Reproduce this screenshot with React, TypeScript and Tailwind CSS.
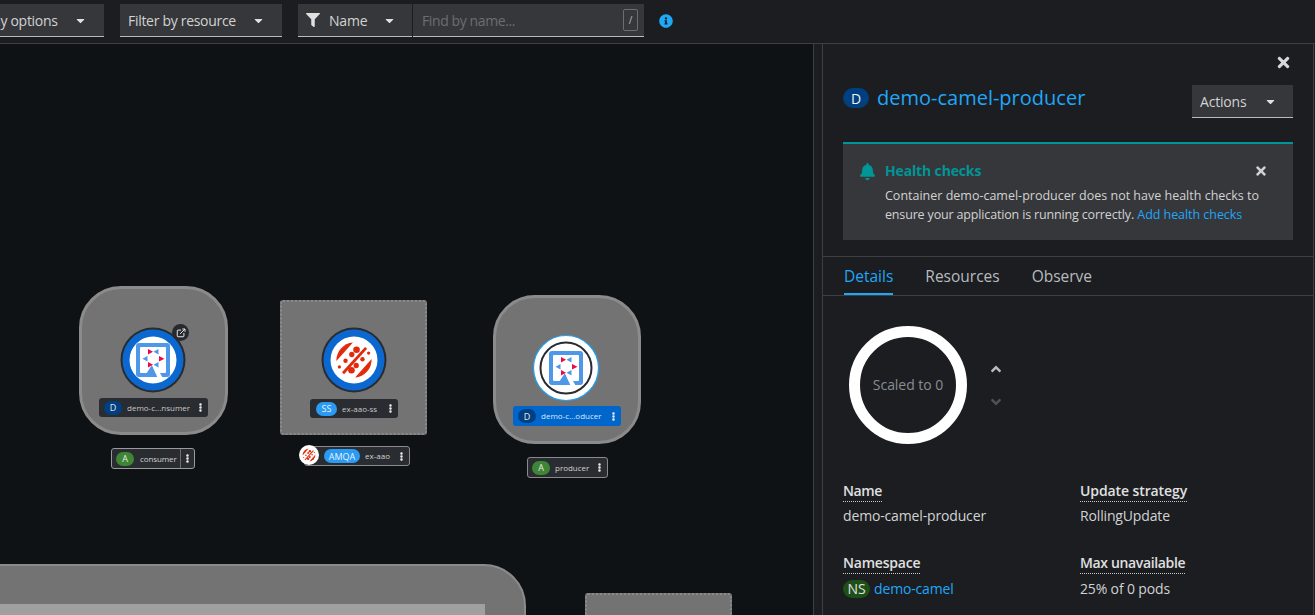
import React from "react";
import { FaBell, FaCaretDown, FaEllipsisV, FaFilter, FaInfoCircle, FaTimes, FaAngleUp, FaAngleDown } from "react-icons/fa";

function CamelIcon({ x, y }: { x: number; y: number }) {
  return (
    <g transform={`translate(${x} ${y})`}>
      <rect x="0" y="0" width="34" height="34" rx="3" fill="#4f97e8" />
      <rect x="4" y="4" width="26" height="26" rx="1" fill="#fff" />
      <path fill="#4f97e8" d="M10 31L16 22L20 31Z" />
      <path fill="#fff" d="M16 22L19 21L26.500 34.500L21.500 34.500Z" />
      <path fill="#ee0a46" d="M12 6l5 2.700-5 2.700ZM23 13l5.500 2.700-5.500 2.700ZM12 19l5 2.700-5 2.700Z" />
      <path fill="#4f97e8" d="M22.500 6v5.400l-5-2.700ZM6.500 15.700l5-2.700v5.400ZM22.500 19v5.400l-5-2.700Z" />
    </g>
  );
}

function RedIcon({ size }: { size: number }) {
  return (
    <svg viewBox="0 0 40 40" width={size} height={size} className="block">
      <path fill="#e02b0c" d="M4 21A16.500 16.500 0 0 1 19 4Z" />
      <path fill="#e02b0c" d="M36 19A16.500 16.500 0 0 1 21 36Z" />
      <path stroke="#e02b0c" strokeWidth="2.600" d="M10 32L31 9" />
      <circle cx="22.300" cy="10.700" r="3" fill="#e02b0c" />
      <circle cx="18" cy="15" r="2.400" fill="#e02b0c" />
      <circle cx="12.300" cy="20.700" r="2" fill="#e02b0c" />
      <circle cx="6.700" cy="26.300" r="1.500" fill="#e02b0c" />
      <circle cx="17.700" cy="29.300" r="3" fill="#e02b0c" />
      <circle cx="22" cy="25" r="2.400" fill="#e02b0c" />
      <circle cx="27.700" cy="19.300" r="2" fill="#e02b0c" />
      <circle cx="33.300" cy="13.700" r="1.500" fill="#e02b0c" />
    </svg>
  );
}

function Ring({ children }: { children: React.ReactNode }) {
  return (
    <svg viewBox="0 0 68 68" width="68" height="68" className="block">
      <circle cx="34" cy="34" r="32.500" fill="#2a2b2e" />
      <circle cx="34" cy="34" r="30.500" fill="#0a68d0" />
      <circle cx="34" cy="34" r="23.500" fill="#fff" />
      {children}
    </svg>
  );
}

function Badge({ className, children }: { className: string; children: React.ReactNode }) {
  return (
    <span className={`flex h-[14px] items-center justify-center rounded-full text-[9px] leading-none ${className}`}>{children}</span>
  );
}

function Kebab({ className = "" }: { className?: string }) {
  return <FaEllipsisV className={`text-[9px] text-[#e8e8e8] ${className}`} />;
}

function Select({ label, className }: { label: string; className: string }) {
  return (
    <div className={`flex h-[33px] shrink-0 items-center justify-between border-b border-[#b8bbbe] bg-[#36373b] pl-2 pr-[17px] text-[14px] tracking-[-0.3px] text-[#d2d2d2] ${className}`}>
      <span>{label}</span>
      <FaCaretDown className="text-[13px] text-[#e0e0e0]" />
    </div>
  );
}

function Field({ label, value, labelClass = "tracking-[-0.1px]", valueClass = "mt-[5px]" }: { label: string; value: React.ReactNode; labelClass?: string; valueClass?: string }) {
  return (
    <div>
      <div className={`text-[14px] font-semibold leading-[19px] text-[#e0e0e0] ${labelClass}`}>
        <span className="border-b border-dotted border-[#c8c8c8] pb-[1px]">{label}</span>
      </div>
      <div className={`text-[14px] leading-[21px] tracking-[-0.15px] text-[#d2d2d2] ${valueClass}`}>{value}</div>
    </div>
  );
}

export default function App() {
  return (
    <div className="flex h-screen w-full flex-col overflow-hidden bg-[#1b1d21] font-['Open_Sans',sans-serif]">
      <div className="flex h-[44px] shrink-0 items-start border-b border-[#3d3f43] pt-[4px]">
        <Select label="Display options" className="-ml-[46px] w-[150px]" />
        <Select label="Filter by resource" className="ml-[16px] w-[162px]" />
        <div className="ml-[16px] flex">
          <div className="flex h-[33px] w-[114px] items-center border-b border-[#b8bbbe] bg-[#36373b] pl-2 text-[14px] tracking-[-0.2px] text-[#d2d2d2]">
            <FaFilter className="text-[14px] text-[#e0e0e0]" />
            <span className="ml-[9px]">Name</span>
            <FaCaretDown className="ml-auto mr-[16px] text-[13px] text-[#e0e0e0]" />
          </div>
          <div className="ml-[1px] flex h-[33px] w-[231px] items-center justify-between border-b border-[#b8bbbe] bg-[#36373b] pl-[9px] pr-[6px] text-[14px] tracking-[-0.4px] text-[#6a6e73]">
            <span>Find by name...</span>
            <span className="flex h-[22px] w-[15px] items-center justify-center rounded-[2px] border border-[#6a6e73] text-[10px] text-[#b8bbbe]">/</span>
          </div>
        </div>
        <FaInfoCircle className="ml-[15px] mt-[10px] text-[14px] text-[#1fa7f8]" />
      </div>

      <div className="flex min-h-0 flex-1">
        <div className="relative w-[814px] shrink-0 overflow-hidden border-r border-[#3d3f43] bg-[#0f1214]">
          {/* consumer */}
          <div className="absolute left-[79px] top-[242px] h-[149px] w-[149px] rounded-[42px] border-[3px] border-[#8b8b8b] bg-[#737373]" />
          <div className="absolute left-[119px] top-[282px]"><Ring><CamelIcon x={17} y={17} /></Ring></div>
          <div className="absolute left-[172px] top-[280px] flex h-[17px] w-[17px] items-center justify-center rounded-full bg-[#26292d]">
            <svg viewBox="0 0 12 12" width="10" height="10" fill="none" stroke="#e8e8e8" strokeWidth="1.200"><path d="M6 2.500H2.500a1 1 0 0 0-1 1V9.500a1 1 0 0 0 1 1H8.500a1 1 0 0 0 1-1V6M5 7l5.500-5.500M7.500 1.200h3.300v3.300" /></svg>
          </div>
          <div className="absolute left-[99px] top-[354px] flex h-[19px] w-[109px] items-center rounded-[3px] bg-[#292c30] pl-[5px] pr-[3px] text-[8px] text-[#c8c8c8]">
            <Badge className="w-[18px] bg-[#004080] text-[#e8e8e8]">D</Badge>
            <span className="ml-[5px]">demo-c...nsumer</span>
            <Kebab className="ml-auto" />
          </div>
          <div className="absolute left-[111px] top-[404px] flex h-[21px] w-[84px] items-center rounded-[3px] border border-[#9a9a9a] bg-[#292c30] pl-[4px] text-[8px] text-[#d2d2d2]">
            <Badge className="w-[18px] bg-[#3e8635] text-[#e8e8e8]">A</Badge>
            <span className="ml-[6px] tracking-[-0.1px]">consumer</span>
            <span className="ml-auto flex h-full w-[14px] items-center justify-center border-l border-[#6a6e73]"><Kebab /></span>
          </div>

          {/* ex-aao */}
          <div className="absolute left-[280px] top-[256px] h-[135px] w-[147px] rounded-[3px] border-2 border-dotted border-[#8b8b8b] bg-[#737373]" />
          <div className="absolute left-[320px] top-[282px]">
            <Ring><foreignObject x="12" y="12" width="44" height="44"><RedIcon size={44} /></foreignObject></Ring>
          </div>
          <div className="absolute left-[310px] top-[355px] flex h-[19px] w-[88px] items-center rounded-[3px] bg-[#292c30] pl-[6px] pr-[3px] text-[8px] text-[#c8c8c8]">
            <Badge className="w-[21px] bg-[#2b9af3] text-[#e8f4ff]">SS</Badge>
            <span className="ml-[5px]">ex-aao-ss</span>
            <Kebab className="ml-auto" />
          </div>
          <div className="absolute left-[304px] top-[402px] flex h-[20px] w-[106px] items-center rounded-[3px] border border-[#8a8a8a] bg-[#292c30] pl-[19px] pr-[3px] text-[8px] text-[#d2d2d2]">
            <Badge className="w-[36px] bg-[#2b9af3] text-[#e8f4ff]">AMQA</Badge>
            <span className="ml-[5px]">ex-aao</span>
            <Kebab className="ml-auto" />
          </div>
          <div className="absolute left-[299px] top-[401px] flex h-[20px] w-[20px] items-center justify-center rounded-full bg-white"><RedIcon size={16} /></div>

          {/* producer */}
          <div className="absolute left-[493px] top-[251px] h-[149px] w-[148px] rounded-[42px] border-[3px] border-[#8b8b8b] bg-[#737373]" />
          <div className="absolute left-[532px] top-[290px]">
            <svg viewBox="0 0 68 68" width="68" height="68" className="block">
              <circle cx="34" cy="34" r="32.500" fill="#fff" stroke="#1fa0f0" strokeWidth="1.200" />
              <circle cx="34" cy="34" r="25.500" fill="#fff" stroke="#2a2b2e" strokeWidth="2" />
              <CamelIcon x={17} y={17} />
            </svg>
          </div>
          <div className="absolute left-[513px] top-[362px] flex h-[20px] w-[108px] items-center rounded-[3px] bg-[#0066cc] pl-[5px] pr-[3px] text-[8px] text-[#d8e8f8]">
            <Badge className="w-[18px] bg-[#004080] text-[#e8e8e8]">D</Badge>
            <span className="ml-[5px]">demo-c...oducer</span>
            <Kebab className="ml-auto" />
          </div>
          <div className="absolute left-[527px] top-[413px] flex h-[21px] w-[81px] items-center rounded-[3px] border border-[#8a8a8a] bg-[#292c30] pl-[4px] pr-[3px] text-[8px] text-[#d2d2d2]">
            <Badge className="w-[18px] bg-[#3e8635] text-[#e8e8e8]">A</Badge>
            <span className="ml-[5px]">producer</span>
            <Kebab className="ml-auto" />
          </div>

          {/* lower groups */}
          <div className="absolute -left-[40px] top-[520px] h-[120px] w-[566px] rounded-[42px] border-[2px] border-[#8b8b8b] bg-[#737373]" />
          <div className="absolute -left-[10px] top-[560px] h-[40px] w-[495px] bg-[#a0a0a0]" />
          <div className="absolute left-[585px] top-[549px] h-[60px] w-[147px] rounded-[3px] border-2 border-dotted border-[#8b8b8b] bg-[#737373]" />
        </div>

        <div className="w-[8px] shrink-0" />

        <div className="mr-[1px] min-w-0 flex-1 overflow-hidden border-l border-r border-[#3d3f43]">
          <div className="flex justify-end pr-[21px] pt-[10px]">
            <FaTimes className="text-[17px] text-[#d8d8d8]" />
          </div>
          <div className="flex items-start justify-between px-[20px] pt-[14px]">
            <div className="mt-[1px] flex items-center">
              <span className="flex h-[20px] w-[26px] items-center justify-center rounded-full bg-[#004080] text-[14px] text-[#f0f0f0]">D</span>
              <span className="ml-[8px] text-[20px] leading-[24px] text-[#1fa7f8]">demo-camel-producer</span>
            </div>
            <div className="flex h-[33px] w-[101px] items-center justify-between border-b border-[#b8bbbe] bg-[#36373b] pl-2 pr-[16px] text-[14px] tracking-[-0.2px] text-[#d2d2d2]">
              <span>Actions</span>
              <FaCaretDown className="text-[13px] text-[#e0e0e0]" />
            </div>
          </div>
          <div className="mx-[20px] mt-[24px] h-[98px] border-t-2 border-[#009596] bg-[#36373b] pl-[16px] pr-[25px] pt-[18px]">
            <div className="flex items-center">
              <FaBell className="text-[17px] text-[#009596]" />
              <span className="ml-[9px] text-[14px] font-bold leading-[18px] tracking-[-0.15px] text-[#009596]">Health checks</span>
              <FaTimes className="ml-auto text-[14px] text-[#d2d2d2]" />
            </div>
            <p className="ml-[26px] mt-[6px] text-[12.5px] leading-[19px] text-[#d2d2d2]">
              Container demo-camel-producer does not have health checks to <span className="tracking-[-0.16px]">ensure your application is running correctly.</span> <span className="tracking-[-0.05px] text-[#1fa7f8]">Add health checks</span>
            </p>
          </div>
          <div className="mt-[16px] flex h-[40px] gap-[32px] border-b border-t border-[#3d3f43] pl-[21px] text-[15.5px] text-[#b8bbbe]">
            <span className="flex h-[38px] items-center border-b-[2px] border-[#1fa7f8] pt-[3px] text-[#1fa7f8]">Details</span>
            <span className="flex h-[38px] items-center pt-[2px]">Resources</span>
            <span className="flex h-[38px] items-center pt-[2px]">Observe</span>
          </div>
          <div className="ml-[26px] mt-[30px] flex items-center">
            <div className="flex h-[118px] w-[118px] items-center justify-center rounded-full border-[11px] border-white pb-[1px] text-[14px] tracking-[-0.05px] text-[#8a8d90]">Scaled to 0</div>
            <div className="ml-[21px] flex flex-col items-center gap-[17px] text-[16px]">
              <FaAngleUp className="text-[#b8bbbe]" />
              <FaAngleDown className="text-[#4f5255]" />
            </div>
          </div>
          <div className="ml-[20px] mt-[37px] grid w-[440px] grid-cols-[237px_1fr] gap-y-[27px]">
            <Field label="Name" value="demo-camel-producer" labelClass="tracking-[-0.4px]" />
            <Field label="Update strategy" value="RollingUpdate" />
            <Field
              label="Namespace"
              labelClass="tracking-[-0.2px]"
              valueClass="mt-[6px]"
              value={
                <span className="flex items-center">
                  <span className="flex h-[18px] w-[27px] items-center justify-center rounded-full bg-[#1e4f18] text-[14px] text-[#e0e0e0]">NS</span>
                  <span className="ml-[4px] text-[#1fa7f8]">demo-camel</span>
                </span>
              }
            />
            <Field label="Max unavailable" value="25% of 0 pods" labelClass="tracking-[-0.35px]" valueClass="mt-[6px]" />
          </div>
        </div>
      </div>
    </div>
  );
}
